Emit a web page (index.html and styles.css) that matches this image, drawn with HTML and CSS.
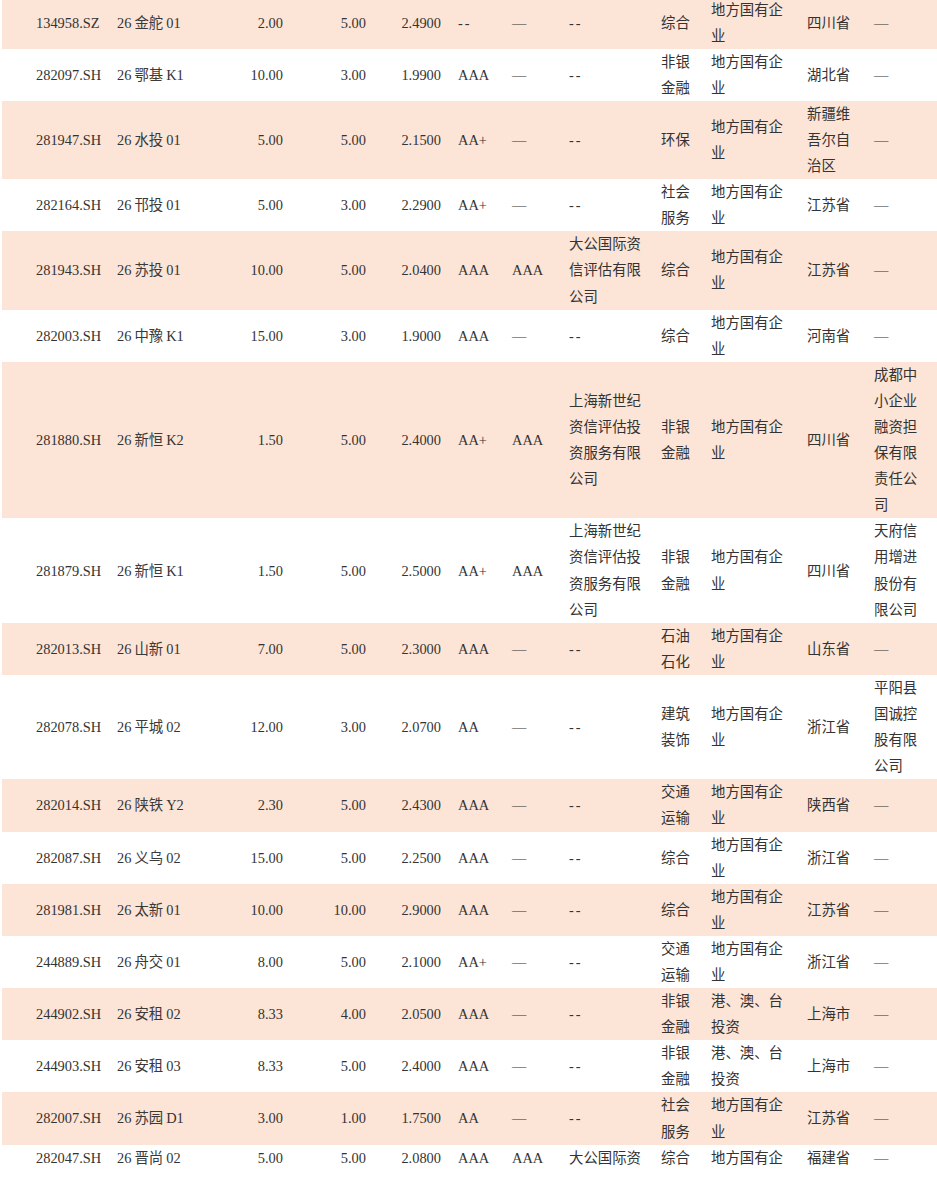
FILE: index.html
```html
<!DOCTYPE html>
<html lang="zh-CN">
<head>
<meta charset="utf-8">
<title>债券发行列表</title>
<link rel="stylesheet" href="styles.css">
</head>
<body>
<table class="bonds">
<colgroup>
<col class="w1"><col class="w2"><col class="w3"><col class="w4"><col class="w5"><col class="w6"><col class="w7"><col class="w8"><col class="w9"><col class="w10"><col class="w11"><col class="w12">
</colgroup>
<tbody>
<tr><td>134958.SZ</td><td>26<span class="cj">金舵</span>01</td><td>2.00</td><td>5.00</td><td>2.4900</td><td class="dd">--</td><td>—</td><td class="dd">--</td><td>综合</td><td>地方国有企业</td><td>四川省</td><td>—</td></tr>
<tr><td>282097.SH</td><td>26<span class="cj">鄂基</span>K1</td><td>10.00</td><td>3.00</td><td>1.9900</td><td>AAA</td><td>—</td><td class="dd">--</td><td>非银金融</td><td>地方国有企业</td><td>湖北省</td><td>—</td></tr>
<tr><td>281947.SH</td><td>26<span class="cj">水投</span>01</td><td>5.00</td><td>5.00</td><td>2.1500</td><td>AA+</td><td>—</td><td class="dd">--</td><td>环保</td><td>地方国有企业</td><td>新疆维吾尔自治区</td><td>—</td></tr>
<tr><td>282164.SH</td><td>26<span class="cj">邗投</span>01</td><td>5.00</td><td>3.00</td><td>2.2900</td><td>AA+</td><td>—</td><td class="dd">--</td><td>社会服务</td><td>地方国有企业</td><td>江苏省</td><td>—</td></tr>
<tr><td>281943.SH</td><td>26<span class="cj">苏投</span>01</td><td>10.00</td><td>5.00</td><td>2.0400</td><td>AAA</td><td>AAA</td><td>大公国际资信评估有限公司</td><td>综合</td><td>地方国有企业</td><td>江苏省</td><td>—</td></tr>
<tr><td>282003.SH</td><td>26<span class="cj">中豫</span>K1</td><td>15.00</td><td>3.00</td><td>1.9000</td><td>AAA</td><td>—</td><td class="dd">--</td><td>综合</td><td>地方国有企业</td><td>河南省</td><td>—</td></tr>
<tr><td>281880.SH</td><td>26<span class="cj">新恒</span>K2</td><td>1.50</td><td>5.00</td><td>2.4000</td><td>AA+</td><td>AAA</td><td>上海新世纪资信评估投资服务有限公司</td><td>非银金融</td><td>地方国有企业</td><td>四川省</td><td>成都中小企业融资担保有限责任公司</td></tr>
<tr><td>281879.SH</td><td>26<span class="cj">新恒</span>K1</td><td>1.50</td><td>5.00</td><td>2.5000</td><td>AA+</td><td>AAA</td><td>上海新世纪资信评估投资服务有限公司</td><td>非银金融</td><td>地方国有企业</td><td>四川省</td><td>天府信用增进股份有限公司</td></tr>
<tr><td>282013.SH</td><td>26<span class="cj">山新</span>01</td><td>7.00</td><td>5.00</td><td>2.3000</td><td>AAA</td><td>—</td><td class="dd">--</td><td>石油石化</td><td>地方国有企业</td><td>山东省</td><td>—</td></tr>
<tr><td>282078.SH</td><td>26<span class="cj">平城</span>02</td><td>12.00</td><td>3.00</td><td>2.0700</td><td>AA</td><td>—</td><td class="dd">--</td><td>建筑装饰</td><td>地方国有企业</td><td>浙江省</td><td>平阳县国诚控股有限公司</td></tr>
<tr><td>282014.SH</td><td>26<span class="cj">陕铁</span>Y2</td><td>2.30</td><td>5.00</td><td>2.4300</td><td>AAA</td><td>—</td><td class="dd">--</td><td>交通运输</td><td>地方国有企业</td><td>陕西省</td><td>—</td></tr>
<tr><td>282087.SH</td><td>26<span class="cj">义乌</span>02</td><td>15.00</td><td>5.00</td><td>2.2500</td><td>AAA</td><td>—</td><td class="dd">--</td><td>综合</td><td>地方国有企业</td><td>浙江省</td><td>—</td></tr>
<tr><td>281981.SH</td><td>26<span class="cj">太新</span>01</td><td>10.00</td><td>10.00</td><td>2.9000</td><td>AAA</td><td>—</td><td class="dd">--</td><td>综合</td><td>地方国有企业</td><td>江苏省</td><td>—</td></tr>
<tr><td>244889.SH</td><td>26<span class="cj">舟交</span>01</td><td>8.00</td><td>5.00</td><td>2.1000</td><td>AA+</td><td>—</td><td class="dd">--</td><td>交通运输</td><td>地方国有企业</td><td>浙江省</td><td>—</td></tr>
<tr><td>244902.SH</td><td>26<span class="cj">安租</span>02</td><td>8.33</td><td>4.00</td><td>2.0500</td><td>AAA</td><td>—</td><td class="dd">--</td><td>非银金融</td><td>港、澳、台投资</td><td>上海市</td><td>—</td></tr>
<tr><td>244903.SH</td><td>26<span class="cj">安租</span>03</td><td>8.33</td><td>5.00</td><td>2.4000</td><td>AAA</td><td>—</td><td class="dd">--</td><td>非银金融</td><td>港、澳、台投资</td><td>上海市</td><td>—</td></tr>
<tr><td>282007.SH</td><td>26<span class="cj">苏园</span>D1</td><td>3.00</td><td>1.00</td><td>1.7500</td><td>AA</td><td>—</td><td class="dd">--</td><td>社会服务</td><td>地方国有企业</td><td>江苏省</td><td>—</td></tr>
<tr><td>282047.SH</td><td>26<span class="cj">晋尚</span>02</td><td>5.00</td><td>5.00</td><td>2.0800</td><td>AAA</td><td>AAA</td><td>大公国际资</td><td>综合</td><td>地方国有企</td><td>福建省</td><td>—</td></tr>
</tbody>
</table>
</body>
</html>
```
FILE: styles.css
```css
html, body {
  margin: 0;
  padding: 0;
  background: #ffffff;
}

.bonds {
  margin: -3.5px 0 0 2px;
  width: 935px;
  table-layout: fixed;
  border-collapse: collapse;
  border-spacing: 0;
  font-family: "Liberation Serif", "Noto Sans CJK SC", serif;
  font-size: 14.4px;
  line-height: 26.1px;
  color: #333333;
}

.w1 { width: 109px; }
.w2 { width: 89px; }
.w3 { width: 89px; }
.w4 { width: 83px; }
.w5 { width: 80px; }
.w6 { width: 54px; }
.w7 { width: 57px; }
.w8 { width: 92px; }
.w9 { width: 50px; }
.w10 { width: 96px; }
.w11 { width: 67px; }
.w12 { width: 69px; }

.bonds tr:nth-child(odd) { background: #fce4d6; }
.bonds tr:nth-child(even) { background: #ffffff; }

.bonds td {
  padding: 0 6px;
  vertical-align: middle;
  text-align: left;
  word-break: break-all;
}

.bonds td:nth-child(1) { padding-left: 34px; white-space: nowrap; }
.bonds td:nth-child(2) { white-space: nowrap; }
.bonds td:nth-child(3),
.bonds td:nth-child(4) { text-align: right; white-space: nowrap; }
.bonds td:nth-child(5) { text-align: right; padding-right: 11px; white-space: nowrap; }
.bonds td:nth-child(8) { padding-right: 8px; }
.bonds td:nth-child(12) { padding-right: 10px; }

.cj {
  margin: 0 3px;
  color: #3a3a3a;
}

.dd {
  letter-spacing: 2px;
}
```
